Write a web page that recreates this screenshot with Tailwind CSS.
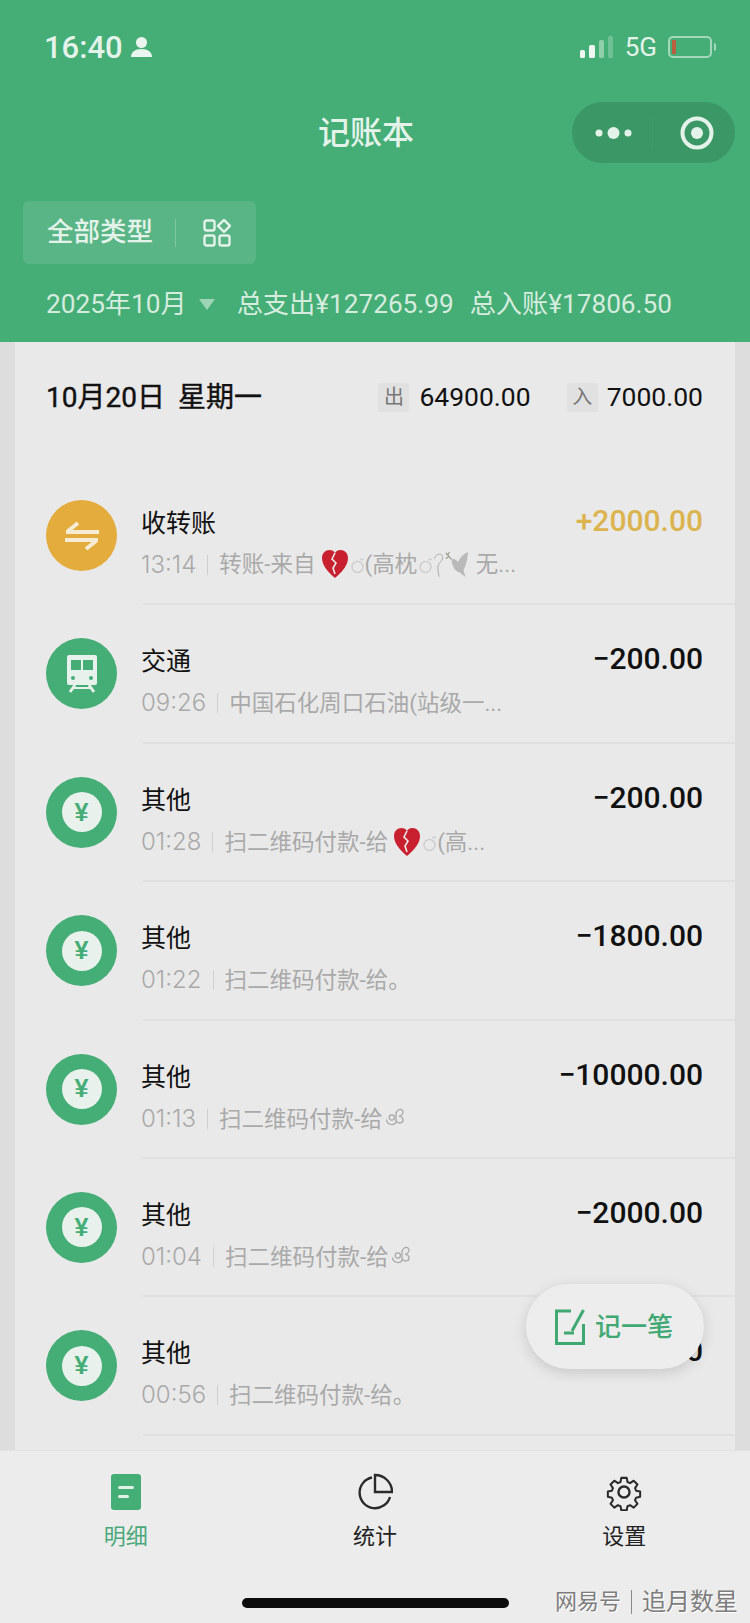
<!DOCTYPE html>
<html lang="zh-CN">
  <head>
    <meta charset="UTF-8" />
    <meta name="viewport" content="width=device-width, initial-scale=1.0" />
    <title>记账本</title>
    <script src="https://cdn.jsdelivr.net/npm/@tailwindcss/browser@4"></script>
  </head>
  <body class="bg-[#dddddd]">
    <main class="relative w-[750px] h-[1623px] overflow-hidden flex flex-col font-['Roboto','Noto_Sans_CJK_SC',sans-serif]">
      <!-- green header -->
      <header class="h-[342px] shrink-0 bg-[#45ad76] text-[#e4f3ea] flex flex-col">
        <div class="h-[94px] flex items-center justify-between pl-[44px] pr-[34px]">
          <div class="flex items-center gap-[8px]">
            <span class="text-[31px] font-medium leading-none">16:40</span>
            <svg width="21" height="22" viewBox="0 0 21 22" fill="#e9f5ee"><circle cx="10.5" cy="6.5" r="5.5" /><path d="M0 21c0-5 4-8 10.500-8S21 16 21 21z" /></svg>
          </div>
          <div class="flex items-center">
            <svg width="34" height="22" viewBox="0 0 34 22">
              <rect x="0" y="14" width="5" height="8" rx="1.500" fill="#eef7f2" />
              <rect x="9" y="9" width="6" height="13" rx="1.500" fill="#eef7f2" />
              <rect x="19" y="4" width="5" height="18" rx="1.500" fill="#8fcfac" />
              <rect x="28" y="0" width="5" height="22" rx="1.500" fill="#6fc095" />
            </svg>
            <span class="ml-[11px] text-[26px] leading-none">5G</span>
            <div class="ml-[11px] w-[44px] h-[22px] rounded-[5px] border-2 border-[#a5d8bb] p-[2px]">
              <div class="w-[4px] h-full bg-[#b8603f]"></div>
            </div>
            <div class="ml-[2px] w-[2px] h-[8px] bg-[#a5d8bb] rounded-r"></div>
          </div>
        </div>
        <div class="relative h-[78px] flex items-center justify-center">
          <h1 class="text-[32px] font-medium leading-none ml-[-18px]">记账本</h1>
          <div class="absolute right-[15px] top-[8px] w-[163px] h-[61px] rounded-full bg-[#3b9766] flex items-center">
            <svg class="ml-[23px]" width="37" height="16" viewBox="0 0 37 16" fill="#e4f3ea"><circle cx="4" cy="8" r="3.500" /><circle cx="18.500" cy="8" r="6" /><circle cx="33" cy="8" r="3.500" /></svg>
            <div class="ml-[20px] w-px h-[32px] bg-[#3f9d6c]"></div>
            <svg class="ml-[27px]" width="34" height="34" viewBox="0 0 34 34"><circle cx="17" cy="17" r="14.500" fill="none" stroke="#e4f3ea" stroke-width="4" /><circle cx="17" cy="17" r="6" fill="#e4f3ea" /></svg>
          </div>
        </div>
        <div class="mt-[29px] ml-[23px] w-[233px] h-[63px] rounded-[6px] bg-[#5ab586] flex items-center pl-[24px]">
          <span class="text-[26.500px] font-medium leading-none">全部类型</span>
          <div class="ml-[22px] w-px h-[28px] bg-[#7cc7a0]"></div>
          <svg class="ml-[27px]" width="28" height="28" viewBox="0 0 28 28" fill="none" stroke="#e4f3ea" stroke-width="2.400">
            <rect x="1.500" y="1.500" width="10" height="10" rx="2" />
            <path d="M21 0.800l6 6-6 6-6-6z" stroke-linejoin="round" />
            <rect x="1.500" y="16.500" width="10" height="10" rx="2" />
            <rect x="16.500" y="16.500" width="10" height="10" rx="2" />
          </svg>
        </div>
        <div class="mt-[20px] h-[40px] flex items-center pl-[46px] text-[26.200px] leading-none text-[#d5ecdf]">
          <span>2025年10月</span>
          <span class="ml-[12px] w-0 h-0 border-x-[8px] border-x-transparent border-t-[11px] border-t-[#9ed5b6]"></span>
          <span class="ml-[22px]">总支出¥127265.99</span>
          <span class="ml-[16px]">总入账¥17806.50</span>
        </div>
      </header>

      <!-- day list -->
      <section class="relative flex-1 min-h-0 mx-[15px] bg-[#e9e9e9] overflow-hidden">
        <div class="h-[125px] flex items-start justify-between pt-[40px] pl-[31px] pr-[32px] text-[#111111]">
          <div class="flex gap-[13px] text-[28px] leading-[32px] [-webkit-text-stroke:0.4px_#111111]">
            <span>10月20日</span>
            <span>星期一</span>
          </div>
          <div class="flex items-center h-[30px]">
            <span class="w-[31px] h-[29px] flex items-center justify-center bg-[#e1e1e1] text-[#777777] text-[20px] rounded-[3px]">出</span>
            <span class="ml-[10px] text-[26.500px] leading-none">64900.00</span>
            <span class="ml-[36px] w-[31px] h-[29px] flex items-center justify-center bg-[#e1e1e1] text-[#777777] text-[20px] rounded-[3px]">入</span>
            <span class="ml-[9px] text-[26.500px] leading-none">7000.00</span>
          </div>
        </div>
        <ul id="rows"></ul>
      </section>

      <!-- tab bar -->
      <nav class="relative h-[173px] shrink-0 bg-[#ececec] border-t border-[#e2e2e2]">
        <div class="grid grid-cols-3 pt-[22px] px-[1px]">
          <div class="flex flex-col items-center text-[#4aa97a]">
            <svg class="h-[38px]" width="30" height="38" viewBox="0 0 30 38"><rect y="1" width="30" height="36" rx="3" fill="#45ad76" /><rect x="7" y="13" width="16" height="3" rx="1.500" fill="#dff1e7" /><rect x="7" y="22" width="11" height="3" rx="1.500" fill="#dff1e7" /></svg>
            <span class="mt-[12px] text-[22px] leading-[28px]">明细</span>
          </div>
          <div class="flex flex-col items-center text-[#222222]">
            <svg class="h-[38px]" width="36" height="38" viewBox="0 0 36 38" fill="none" stroke="#2a2a2a" stroke-width="2.400"><path d="M15 4.500A15.500 15.500 0 1 0 33 24" /><path d="M18 2V19H35A17 17 0 0 0 18 2z" /></svg>
            <span class="mt-[12px] text-[22px] leading-[28px]">统计</span>
          </div>
          <div class="flex flex-col items-center text-[#222222]">
            <svg class="h-[38px]" width="40" height="40" viewBox="0 0 24 24" fill="none" stroke="#2a2a2a" stroke-width="1.500" stroke-linejoin="round"><circle cx="12" cy="12" r="3.500" /><path d="M10 1.500h4l.6 3.100 1.900.8 2.700-1.800 2.800 2.800-1.800 2.700.8 1.900 3 .6v4l-3 .6-.8 1.900 1.800 2.700-2.800 2.800-2.700-1.800-1.900.8-.6 3h-4l-.6-3-1.900-.8-2.700 1.800-2.800-2.800 1.800-2.700-.8-1.900-3-.6v-4l3-.6.8-1.900-1.800-2.700 2.800-2.800 2.700 1.800 1.900-.8z" transform="translate(1.800 1.800) scale(.85)" /></svg>
            <span class="mt-[12px] text-[22px] leading-[28px]">设置</span>
          </div>
        </div>
        <div class="absolute left-[242px] bottom-[15px] w-[267px] h-[10px] rounded-full bg-[#0c0c0c]"></div>
        <div class="absolute right-[12px] bottom-[9px] flex items-center text-[#7d7d7d] [text-shadow:1px_1px_0_#ffffff] leading-none">
          <span class="text-[22px]">网易号</span>
          <span class="mx-[10px] w-px h-[24px] bg-[#8a8a8a]"></span>
          <span class="text-[24px]">追月数星</span>
        </div>
      </nav>

      <!-- floating add button -->
      <button class="absolute left-[526px] top-[1284px] w-[178px] h-[85px] rounded-full bg-[#ededed] shadow-[0_4px_14px_rgba(0,0,0,0.14)] flex items-center pl-[29px] text-[#3fa873]">
        <svg width="30" height="36" viewBox="0 0 30 36" fill="none" stroke="#3fa873" stroke-width="3"><path d="M16 2H1.500v32.500h27V15" /><path d="M28.500 1L17 22" /><path d="M9 24h10" /></svg>
        <span class="ml-[10px] text-[26px] font-medium leading-none">记一笔</span>
      </button>
    </main>

    <script>
      const heart = `<svg class="inline-block align-[-7px] ml-[5px]" width="28" height="30" viewBox="0 0 28 30"><path d="M14 29C6 22 1 16 1 9c0-5 3.500-8 7.500-8 2.500 0 4.500 1 5.500 3 1-2 3-3 5.500-3C23.500 1 27 4 27 9c0 7-5 13-13 20z" fill="#c8202f" /><path d="M14 4l-3 6 4 4-3 5 2 6" fill="none" stroke="#ececec" stroke-width="1.600" /></svg>`;
      const ring = `<svg class="inline-block align-[-2px] ml-[2px]" width="14" height="16" viewBox="0 0 14 16" fill="none" stroke="#cfcfcf" stroke-width="1.500"><circle cx="6.500" cy="9" r="5.500" /><path d="M9 1.500h4" /></svg>`;
      const hook = `<svg class="inline-block align-[-10px]" width="11" height="34" viewBox="0 0 16 38" fill="none" stroke="#a8a8a8" stroke-width="1.400"><path d="M2 10C3 3 14 0 14 8c0 7-7 8-7 14 0 5 1 10 2 14" /></svg>`;
      const dove = `<svg class="inline-block align-[-8px]" width="26" height="30" viewBox="0 0 28 32"><path d="M8 10c3-1 5 0 7 3 2-5 6-9 11-11-1 6-1 13-5 19l2 8-6-5c-5-1-8-6-9-14z" fill="#b9b9b9" /><path d="M8 10L2 3M5 7l-3 2M4 5l2-3" stroke="#8f9a88" stroke-width="1.200" fill="none" /></svg>`;
      const knot = `<svg class="inline-block align-[-3px] ml-[2px]" width="22" height="25" viewBox="0 0 20 24" fill="none" stroke="#a8a8a8" stroke-width="1.200"><path d="M1 14c0 5 6 6 9 3V9M10 9c0-4 4-6 6-4s0 5-3 6c4 0 5 5 2 6-3 1-5-1-5-3" /><circle cx="6" cy="12" r="2.500" /></svg>`;

      const yen = `<div class="w-[40px] h-[40px] rounded-full bg-[#e8f1ec] flex items-center justify-center text-[#45ad76] text-[25px] font-bold font-['Liberation_Sans']">¥</div>`;
      const transfer = `<svg width="36" height="30" viewBox="0 0 36 30" fill="none" stroke="#f5ecd3" stroke-width="4"><path d="M2 11h33M14 2L4 10" /><path d="M1 19h33M22 28l10-8" /></svg>`;
      const train = `<svg width="34" height="40" viewBox="0 0 34 40"><rect x="2" y="1" width="30" height="30" rx="2" fill="#e6f2eb" /><rect x="6" y="6" width="10" height="10" fill="#45ad76" /><rect x="18" y="6" width="10" height="10" fill="#45ad76" /><circle cx="8" cy="24" r="2" fill="#45ad76" /><circle cx="26" cy="24" r="2" fill="#45ad76" /><path d="M10 31l-5 7M24 31l5 7" stroke="#e6f2eb" stroke-width="3" /><path d="M8 34h18" stroke="#e6f2eb" stroke-width="2" /></svg>`;

      const rows = [
        { title: "收转账", time: "13:14", sub: `转账-来自${heart}${ring}(高枕${ring}${hook}${dove} 无...`, amount: "+2000.00", gold: true, icon: transfer },
        { title: "交通", time: "09:26", sub: "中国石化周口石油(站级一...", amount: "−200.00", icon: train },
        { title: "其他", time: "01:28", sub: `扫二维码付款-给${heart}${ring}(高...`, amount: "−200.00", icon: yen },
        { title: "其他", time: "01:22", sub: "扫二维码付款-给。", amount: "−1800.00", icon: yen },
        { title: "其他", time: "01:13", sub: `扫二维码付款-给${knot}`, amount: "−10000.00", icon: yen },
        { title: "其他", time: "01:04", sub: `扫二维码付款-给${knot}`, amount: "−2000.00", icon: yen },
        { title: "其他", time: "00:56", sub: "扫二维码付款-给。", amount: "−200.00", icon: yen },
      ];

      document.getElementById("rows").innerHTML = rows
        .map(
          (row) => `
          <li class="relative h-[138.4px] flex items-start pt-[33px] pl-[31px] pr-[32px]">
            <div class="w-[71px] h-[71px] shrink-0 rounded-full flex items-center justify-center ${row.gold ? "bg-[#e3ac3c]" : "bg-[#45ad76]"}">${row.icon}</div>
            <div class="ml-[24px] min-w-0 flex-1 mt-[7px]">
              <div class="text-[25px] leading-[34px] text-[#111111]">${row.title}</div>
              <div class="mt-[9px] h-[30px] flex items-center whitespace-nowrap text-[#a9a9a9]">
                <span class="font-['Inter'] font-light text-[24px] leading-none">${row.time}</span>
                <span class="mx-[11px] w-px h-[20px] bg-[#cfcfcf]"></span>
                <span class="text-[22.500px] leading-[30px]">${row.sub}</span>
              </div>
            </div>
            <div class="mt-[3px] text-[30px] font-medium leading-[36px] ${row.gold ? "text-[#dcb44f]" : "text-[#111111]"}">${row.amount}</div>
            <div class="absolute left-[128px] right-0 bottom-0 h-[2px] bg-[#e0e0e0]"></div>
          </li>`
        )
        .join("");
    </script>
  </body>
</html>
